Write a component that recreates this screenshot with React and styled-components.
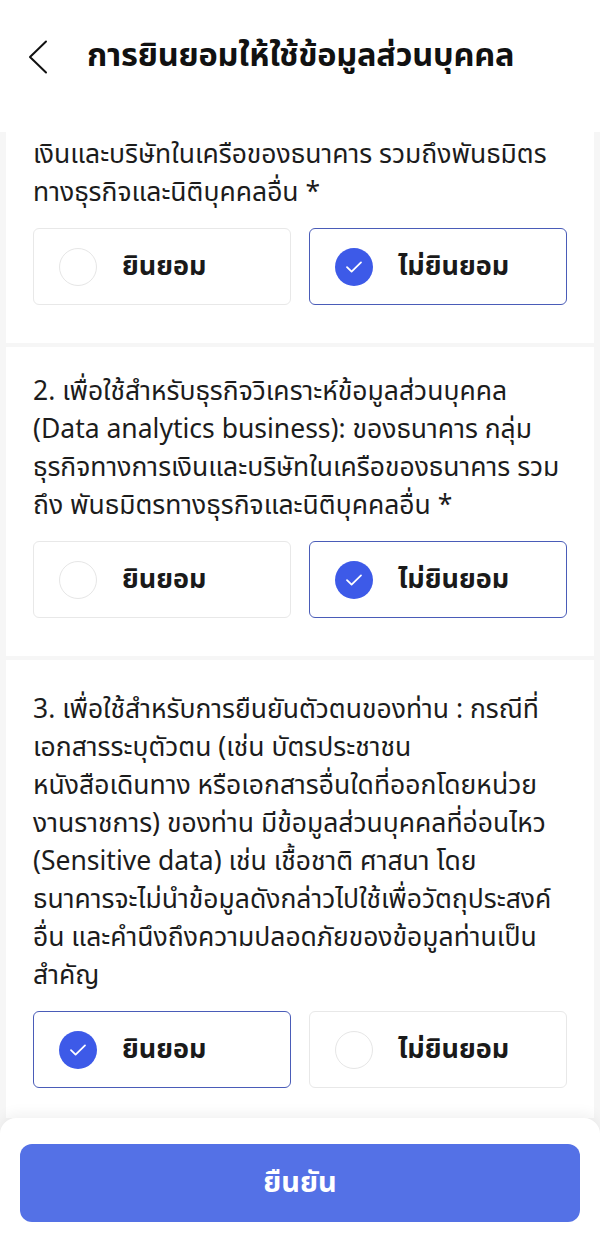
import React from "react";
import styled, { createGlobalStyle } from "styled-components";

const Global = createGlobalStyle`
  * { box-sizing: border-box; }
  html, body { margin: 0; padding: 0; background: #ffffff; }
  body { font-family: "Noto Sans Thai", "Noto Sans", "Liberation Sans", sans-serif; color: #1a1a1a; }
`;

const Screen = styled.div`
  width: 600px;
  height: 1236px;
  display: flex;
  flex-direction: column;
  background: #f6f6f6;
  overflow: hidden;
`;

const Header = styled.header`
  height: 132px;
  flex: none;
  background: #ffffff;
  display: flex;
  align-items: flex-start;
  padding: 35px 0 0 28px;
  gap: 37px;
`;

const BackButton = styled.button`
  border: none;
  background: none;
  padding: 0;
  width: 22px;
  height: 44px;
  display: flex;
  align-items: center;
  cursor: pointer;
`;

const Title = styled.h1`
  margin: 0;
  font-size: 32.5px;
  font-weight: 700;
  line-height: 44px;
  color: #111111;
  letter-spacing: -0.2px;
  white-space: nowrap;
`;

const Main = styled.main`
  flex: 1;
  min-height: 0;
  overflow: hidden;
  display: flex;
  flex-direction: column;
  justify-content: flex-end;
  gap: 4px;
  padding: 0 6px;
`;

const Card = styled.section`
  flex: none;
  background: #ffffff;
  padding: ${(p) => (p.$last ? "31px 27px 30px" : "26px 27px 38px")};
`;

const Question = styled.p`
  margin: 0;
  font-size: 26.5px;
  line-height: 38px;
  color: #1c1c1c;
`;

const Line = styled.span`
  display: block;
  white-space: nowrap;
`;

const Options = styled.div`
  display: grid;
  grid-template-columns: 1fr 1fr;
  gap: 18px;
  margin-top: 16px;
`;

const Option = styled.button`
  height: 77px;
  display: flex;
  align-items: center;
  gap: 25px;
  padding: 0 0 0 25px;
  background: #ffffff;
  border: ${(p) => (p.$selected ? "1.5px solid #4a5cb8" : "1.5px solid #e8e8e8")};
  border-radius: 6px;
  font-family: inherit;
  cursor: pointer;
`;

const Radio = styled.span`
  width: 38px;
  height: 38px;
  border-radius: 50%;
  flex: none;
  display: flex;
  align-items: center;
  justify-content: center;
  background: ${(p) => (p.$checked ? "#3d5ae8" : "#ffffff")};
  border: ${(p) => (p.$checked ? "none" : "1.5px solid #e6e6e6")};
`;

const OptionLabel = styled.span`
  font-size: 27px;
  font-weight: 700;
  color: #1a1a1a;
  line-height: 1;
`;

const Footer = styled.footer`
  flex: none;
  height: 118px;
  background: #ffffff;
  border-radius: 16px 16px 0 0;
  box-shadow: 0 -4px 14px rgba(0, 0, 0, 0.06);
  padding: 26px 20px 14px;
  position: relative;
  z-index: 1;
`;

const Confirm = styled.button`
  width: 100%;
  height: 78px;
  border: none;
  border-radius: 12px;
  background: #5471e6;
  color: #ffffff;
  font-family: inherit;
  font-size: 29px;
  font-weight: 700;
  cursor: pointer;
`;

const Check = () => (
  <svg width="18" height="14" viewBox="0 0 18 14" fill="none">
    <path d="M2 7.2 L6.6 11.6 L16 2.4" stroke="#ffffff" strokeWidth="1.8" strokeLinecap="round" strokeLinejoin="round" />
  </svg>
);

const Chevron = () => (
  <svg width="20" height="34" viewBox="0 0 20 34" fill="none">
    <path d="M18 1.5 L2 17 L18 32.5" stroke="#111" strokeWidth="2" strokeLinecap="round" strokeLinejoin="round" />
  </svg>
);

const items = [
  {
    lines: [
      "1. เพื่อใช้สำหรับวัตถุประสงค์ทางการตลาด",
      "(Marketing purpose): ของธนาคาร กลุ่มธุรกิจทางการ",
      "เงินและบริษัทในเครือของธนาคาร รวมถึงพันธมิตร",
      "ทางธุรกิจและนิติบุคคลอื่น *",
    ],
    value: "no",
  },
  {
    lines: [
      "2. เพื่อใช้สำหรับธุรกิจวิเคราะห์ข้อมูลส่วนบุคคล",
      "(Data analytics business): ของธนาคาร กลุ่ม",
      "ธุรกิจทางการเงินและบริษัทในเครือของธนาคาร รวม",
      "ถึง พันธมิตรทางธุรกิจและนิติบุคคลอื่น *",
    ],
    value: "no",
  },
  {
    lines: [
      "3. เพื่อใช้สำหรับการยืนยันตัวตนของท่าน : กรณีที่",
      "เอกสารระบุตัวตน (เช่น บัตรประชาชน",
      "หนังสือเดินทาง หรือเอกสารอื่นใดที่ออกโดยหน่วย",
      "งานราชการ) ของท่าน มีข้อมูลส่วนบุคคลที่อ่อนไหว",
      "(Sensitive data) เช่น เชื้อชาติ ศาสนา โดย",
      "ธนาคารจะไม่นำข้อมูลดังกล่าวไปใช้เพื่อวัตถุประสงค์",
      "อื่น และคำนึงถึงความปลอดภัยของข้อมูลท่านเป็น",
      "สำคัญ",
    ],
    value: "yes",
  },
];

const choices = [
  { key: "yes", label: "ยินยอม" },
  { key: "no", label: "ไม่ยินยอม" },
];

export default function App() {
  return (
    <>
      <Global />
      <Screen>
        <Header>
          <BackButton aria-label="back">
            <Chevron />
          </BackButton>
          <Title>การยินยอมให้ใช้ข้อมูลส่วนบุคคล</Title>
        </Header>
        <Main>
          {items.map((item, i) => (
            <Card key={i} $last={i === items.length - 1}>
              <Question>
                {item.lines.map((l, j) => (
                  <Line key={j}>{l}</Line>
                ))}
              </Question>
              <Options>
                {choices.map((c) => {
                  const sel = item.value === c.key;
                  return (
                    <Option key={c.key} $selected={sel}>
                      <Radio $checked={sel}>{sel && <Check />}</Radio>
                      <OptionLabel>{c.label}</OptionLabel>
                    </Option>
                  );
                })}
              </Options>
            </Card>
          ))}
        </Main>
        <Footer>
          <Confirm>ยืนยัน</Confirm>
        </Footer>
      </Screen>
    </>
  );
}
